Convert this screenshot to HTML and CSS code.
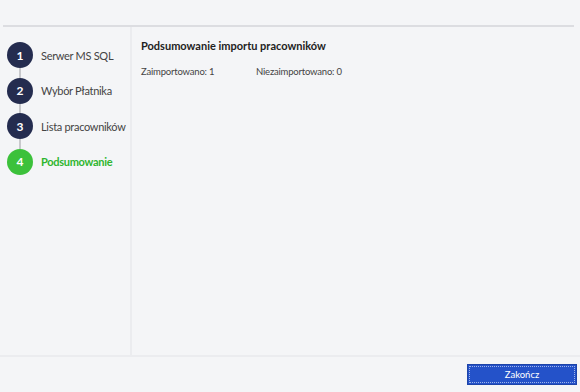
FILE: index.html
```html
<!DOCTYPE html>
<html lang="pl">
  <head>
    <meta charset="UTF-8" />
    <title>Import pracowników</title>
    <link rel="stylesheet" href="styles.css">
  </head>
  <body>
    <div class="top"></div>
    <div class="wizard">
      <aside class="steps">
        <ul>
          <li class="done"><span class="num">1</span><span class="label">Serwer MS SQL</span></li>
          <li class="done"><span class="num">2</span><span class="label">Wybór Płatnika</span></li>
          <li class="done"><span class="num">3</span><span class="label">Lista pracowników</span></li>
          <li class="current"><span class="num">4</span><span class="label">Podsumowanie</span></li>
        </ul>
      </aside>
      <main class="content">
        <h1>Podsumowanie importu pracowników</h1>
        <div class="stats">
          <span class="stat">Zaimportowano: 1</span>
          <span class="stat">Niezaimportowano: 0</span>
        </div>
      </main>
    </div>
    <footer>
      <button>Zakończ</button>
    </footer>
  </body>
</html>
```

FILE: styles.css
```css
body {
  font-family: Lato, "Noto Sans", sans-serif;
  margin: 0;
  background-color: #f4f5f7;
  color: #333;
  width: 580px;
  height: 392px;
  display: flex;
  flex-direction: column;
}

.top {
  height: 25px;
  margin: 0 6px 0 3px;
  border-bottom: 2px solid #dcdde1;
}

.wizard {
  flex: 1;
  display: flex;
  border-bottom: 2px solid #ebecef;
}

.steps {
  width: 130px;
  border-right: 2px solid #ebecef;
}

.steps ul {
  list-style: none;
  margin: 0;
  padding: 15px 0 0 7px;
}

.steps li {
  display: flex;
  align-items: center;
  gap: 8px;
  height: 26px;
  margin-bottom: 9.5px;
  position: relative;
  font-size: 11px;
  letter-spacing: -0.3px;
  color: #444;
  white-space: nowrap;
}

.steps li:not(:last-child)::after {
  content: "";
  position: absolute;
  left: 12px;
  top: 26px;
  width: 2px;
  height: 10px;
  background-color: #c8c9cc;
}

.steps .num {
  width: 26px;
  height: 26px;
  border-radius: 50%;
  background-color: #242c4f;
  color: white;
  font-weight: bold;
  font-size: 12px;
  letter-spacing: 0;
  display: flex;
  align-items: center;
  justify-content: center;
  flex-shrink: 0;
}

.steps li.current .num {
  background-color: #3cc13b;
}

.steps li.current .label {
  color: #2fb52f;
  font-weight: bold;
}

.content {
  flex: 1;
  padding: 12px 9px;
}

.content h1 {
  font-size: 11px;
  font-weight: bold;
  color: #222;
  margin: 0 0 14px;
}

.stats {
  display: flex;
  font-size: 9.5px;
  letter-spacing: -0.2px;
  color: #444;
}

.stat:first-child {
  width: 115px;
}

footer {
  height: 35px;
  display: flex;
  justify-content: flex-end;
  align-items: flex-start;
  padding-right: 3px;
}

button {
  margin-top: 7px;
  width: 110px;
  height: 21px;
  background-color: #2452c9;
  color: white;
  border: 1px solid #1d44a8;
  outline: 1px dotted #9fb5ea;
  outline-offset: -3px;
  font-family: Lato, sans-serif;
  font-size: 9.5px;
}
```
